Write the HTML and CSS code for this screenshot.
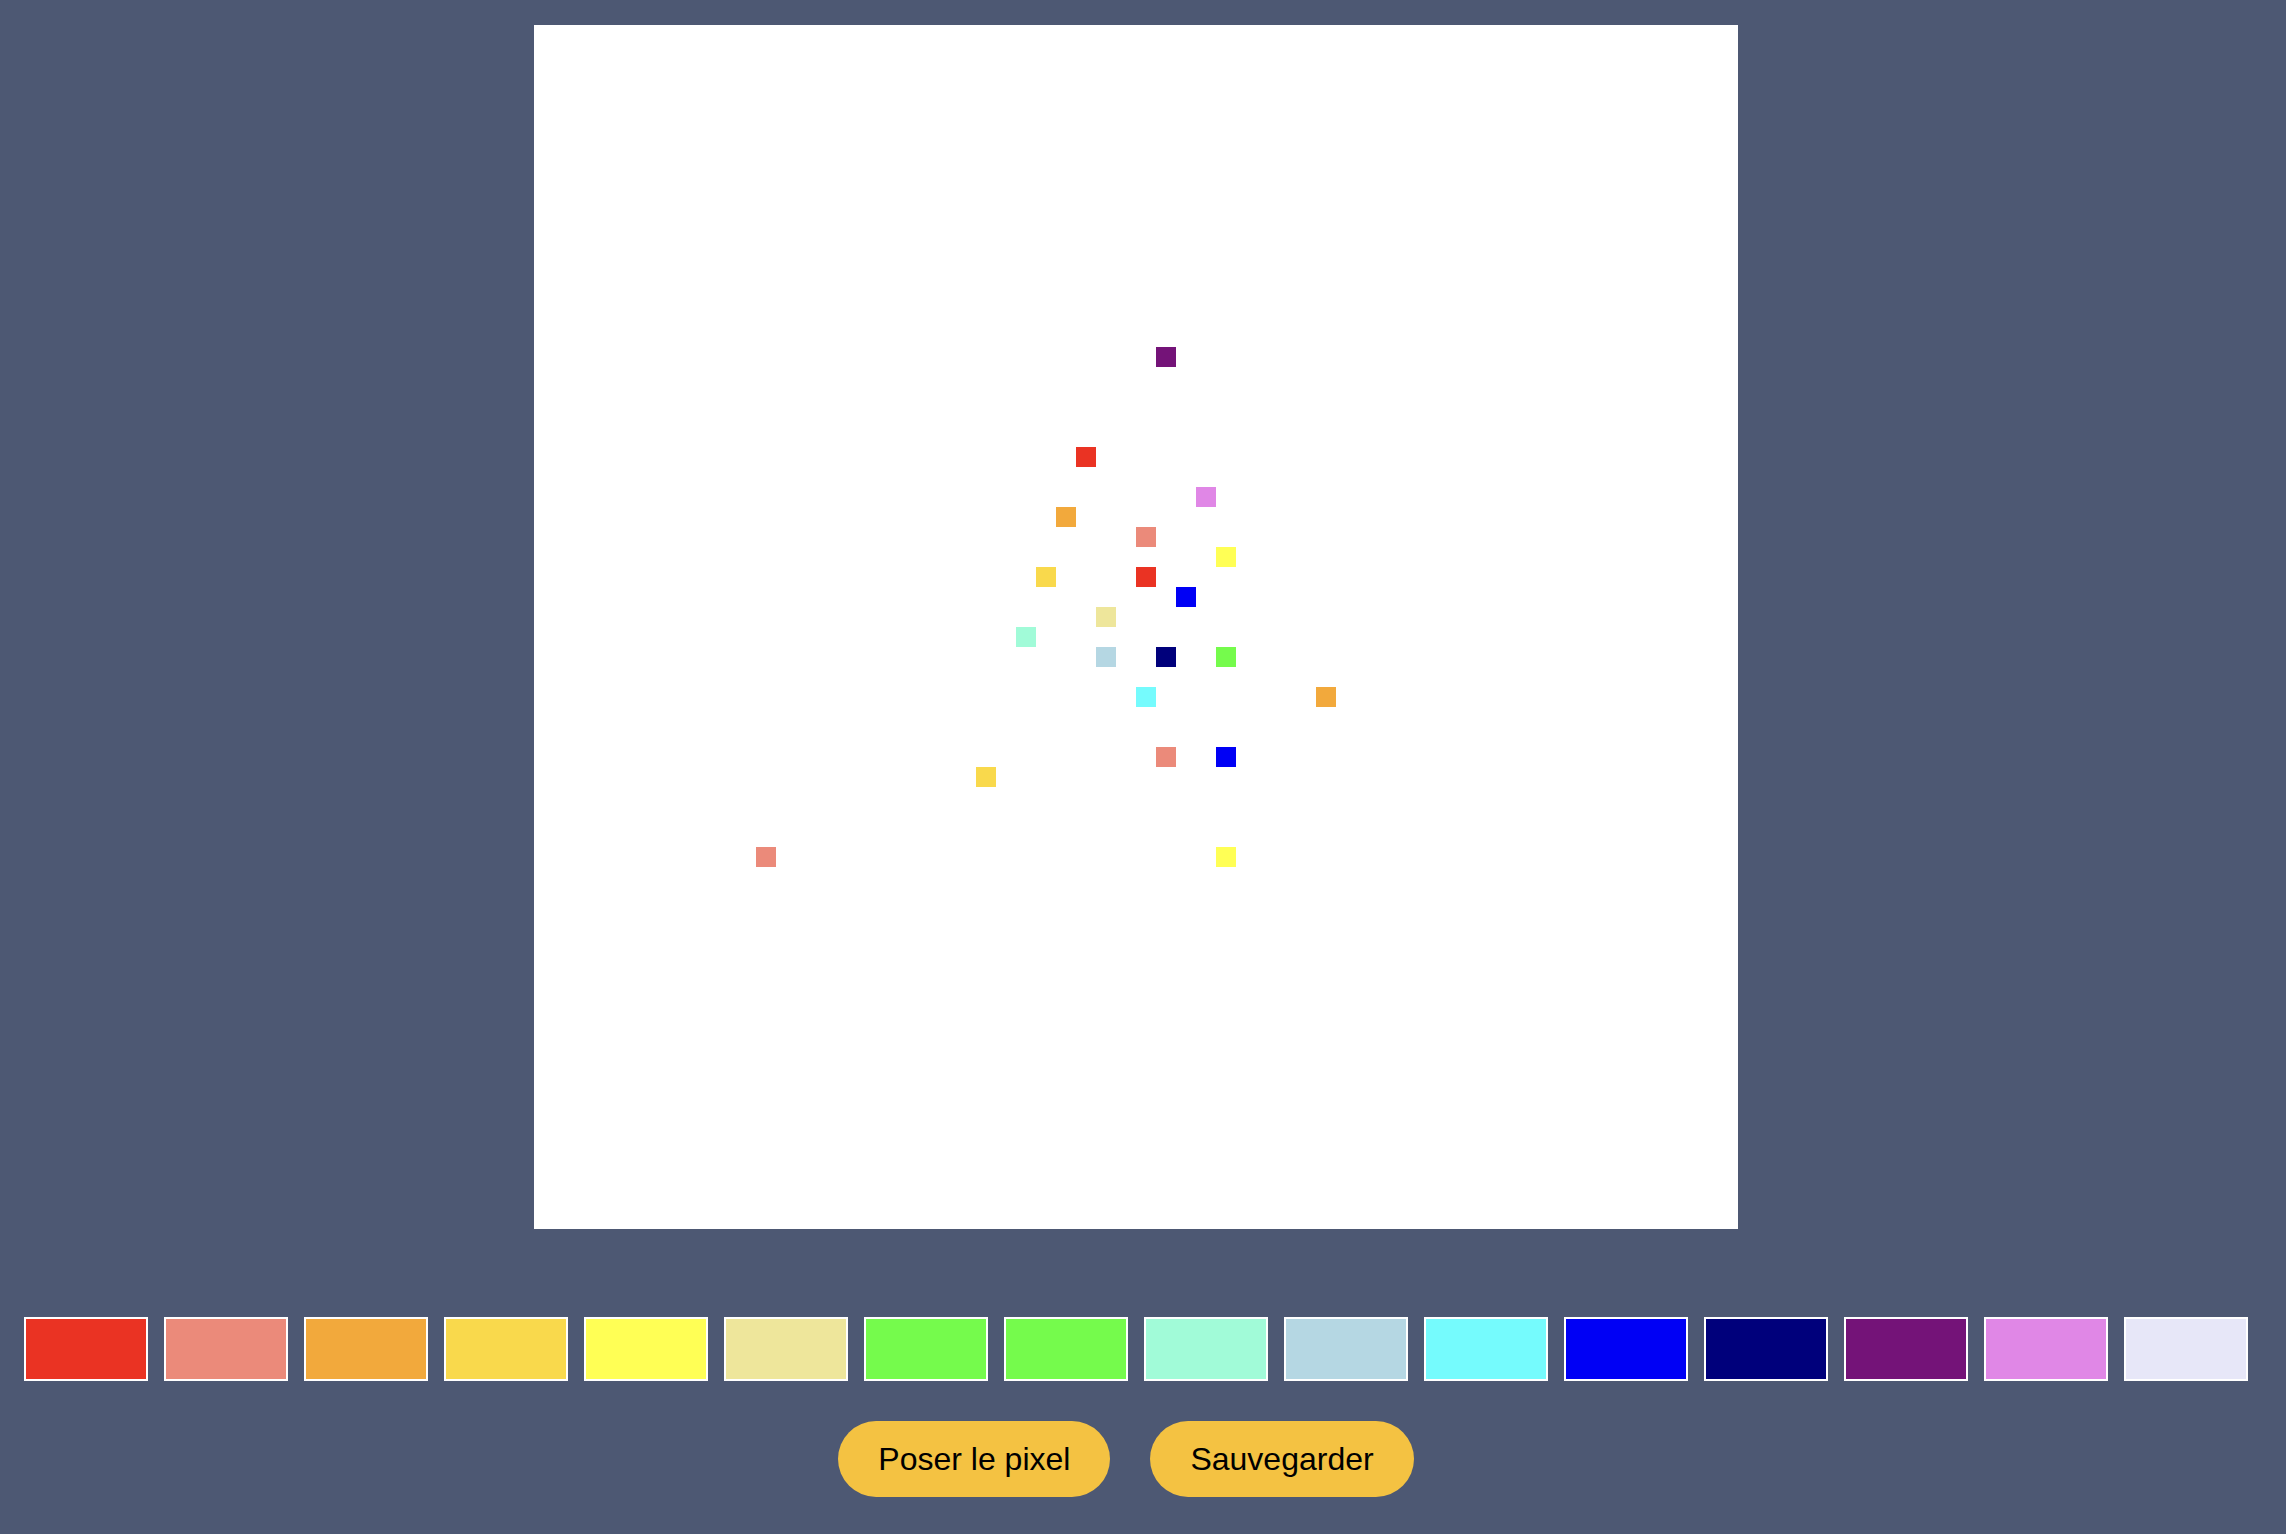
FILE: index.html
```html
<!DOCTYPE html>
<html lang="fr">
<head>
<meta charset="utf-8">
<title>Pixel</title>
<link rel="stylesheet" href="styles.css">
</head>
<body>
<main class="app">
  <div class="canvas">
    <span class="px purple" style="grid-column:32;grid-row:17"></span>
    <span class="px red" style="grid-column:28;grid-row:22"></span>
    <span class="px violet" style="grid-column:34;grid-row:24"></span>
    <span class="px orange" style="grid-column:27;grid-row:25"></span>
    <span class="px salmon" style="grid-column:31;grid-row:26"></span>
    <span class="px yellow" style="grid-column:35;grid-row:27"></span>
    <span class="px gold" style="grid-column:26;grid-row:28"></span>
    <span class="px red" style="grid-column:31;grid-row:28"></span>
    <span class="px blue" style="grid-column:33;grid-row:29"></span>
    <span class="px khaki" style="grid-column:29;grid-row:30"></span>
    <span class="px aqua" style="grid-column:25;grid-row:31"></span>
    <span class="px lightblue" style="grid-column:29;grid-row:32"></span>
    <span class="px navy" style="grid-column:32;grid-row:32"></span>
    <span class="px green" style="grid-column:35;grid-row:32"></span>
    <span class="px cyan" style="grid-column:31;grid-row:34"></span>
    <span class="px orange" style="grid-column:40;grid-row:34"></span>
    <span class="px salmon" style="grid-column:32;grid-row:37"></span>
    <span class="px blue" style="grid-column:35;grid-row:37"></span>
    <span class="px gold" style="grid-column:23;grid-row:38"></span>
    <span class="px salmon" style="grid-column:12;grid-row:42"></span>
    <span class="px yellow" style="grid-column:35;grid-row:42"></span>
  </div>
  <div class="palette">
    <button class="swatch red" aria-label="rouge"></button>
    <button class="swatch salmon" aria-label="saumon"></button>
    <button class="swatch orange" aria-label="orange"></button>
    <button class="swatch gold" aria-label="or"></button>
    <button class="swatch yellow" aria-label="jaune"></button>
    <button class="swatch khaki" aria-label="kaki"></button>
    <button class="swatch green" aria-label="vert"></button>
    <button class="swatch green" aria-label="vert clair"></button>
    <button class="swatch aqua" aria-label="aigue-marine"></button>
    <button class="swatch lightblue" aria-label="bleu clair"></button>
    <button class="swatch cyan" aria-label="cyan"></button>
    <button class="swatch blue" aria-label="bleu"></button>
    <button class="swatch navy" aria-label="marine"></button>
    <button class="swatch purple" aria-label="violet"></button>
    <button class="swatch violet" aria-label="mauve"></button>
    <button class="swatch lavender" aria-label="lavande"></button>
  </div>
  <div class="actions">
    <button class="action">Poser le pixel</button>
    <button class="action">Sauvegarder</button>
  </div>
</main>
</body>
</html>
```
FILE: styles.css
```css
html, body {
  margin: 0;
  padding: 0;
  background: #4d5873;
  font-family: "Liberation Sans", Arial, sans-serif;
}

.app {
  width: 2272px;
  display: flex;
  flex-direction: column;
  align-items: center;
  padding-top: 25px;
  padding-bottom: 30px;
}

.canvas {
  width: 1200px;
  height: 1200px;
  border: 2px solid #ffffff;
  background: #ffffff;
  display: grid;
  grid-template-columns: repeat(60, 20px);
  grid-template-rows: repeat(60, 20px);
}

.px {
  display: block;
  width: 20px;
  height: 20px;
}

.palette {
  margin-top: 88px;
  display: flex;
  gap: 16px;
}

.swatch {
  width: 124px;
  height: 64px;
  border: 2px solid #ffffff;
  padding: 0;
  margin: 0;
  box-sizing: border-box;
  cursor: pointer;
}

.actions {
  margin-top: 40px;
  display: flex;
  gap: 40px;
  padding-right: 20px;
}

.action {
  font-family: "Liberation Sans", Arial, sans-serif;
  font-size: 32px;
  line-height: 36px;
  padding: 20px 40px;
  border: none;
  border-radius: 38px;
  background: #f4c242;
  color: #000000;
  cursor: pointer;
}

.red { background: #ea3323; }
.salmon { background: #eb8a7a; }
.orange { background: #f2a93c; }
.gold { background: #f9d94c; }
.yellow { background: #ffff55; }
.khaki { background: #eee69b; }
.green { background: #75fb4c; }
.aqua { background: #a1fbd8; }
.lightblue { background: #b5d7e3; }
.cyan { background: #75fbfd; }
.blue { background: #0000f5; }
.navy { background: #00007b; }
.purple { background: #741378; }
.violet { background: #e087e6; }
.lavender { background: #e7e7f8; }
```
